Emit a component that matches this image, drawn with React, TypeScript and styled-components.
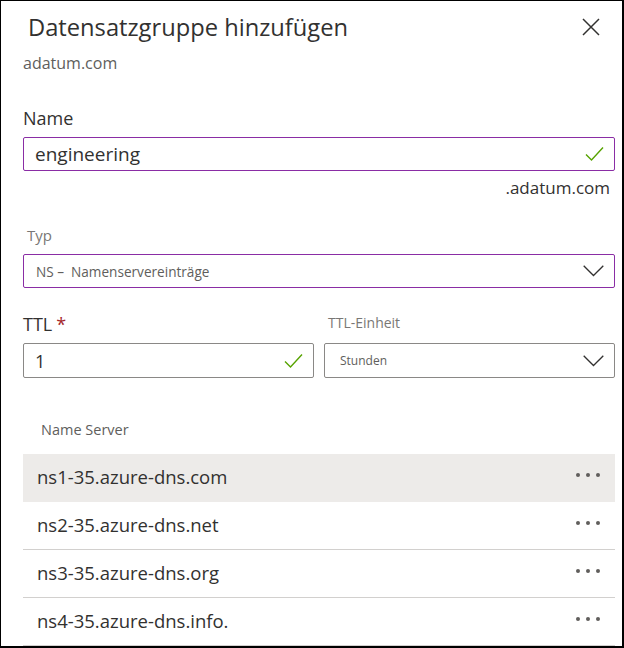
import React from "react";
import styled, { createGlobalStyle } from "styled-components";

const Global = createGlobalStyle`
  html, body { margin: 0; padding: 0; background: #fff; }
  body { font-family: "Segoe UI", "Open Sans", "Noto Sans", sans-serif; }
  * { box-sizing: border-box; }
`;

const Frame = styled.div`
  width: 624px;
  height: 648px;
  border-top: 1px solid #000;
  border-left: 1px solid #000;
  border-right: 2px solid #000;
  border-bottom: 2px solid #000;
  overflow: hidden;
  padding: 0 7px 0 22px;
  display: flex;
  flex-direction: column;
`;

const Header = styled.div`
  display: flex;
  align-items: center;
  justify-content: space-between;
  height: 54px;
  padding: 0 15px 0 5px;
`;

const Title = styled.h1`
  margin: 0;
  font-size: 23.7px;
  font-weight: 400;
  color: #323130;
  line-height: 30px;
`;

const Subtitle = styled.div`
  font-size: 16px;
  color: #605e5c;
  line-height: 20px;
  white-space: nowrap;
`;

const Label = styled.div<{ $small?: boolean; $mt: number }>`
  margin-top: ${(p) => p.$mt}px;
  font-size: ${(p) => (p.$small ? "15px" : "18px")};
  color: ${(p) => (p.$small ? "#797775" : "#323130")};
  line-height: 22px;
  padding-left: ${(p) => (p.$small ? "4px" : "0")};
`;

const Required = styled.span`
  color: #a4262c;
  margin-left: 4px;
`;

const Field = styled.div<{ $accent?: boolean; $mt: number }>`
  margin-top: ${(p) => p.$mt}px;
  height: 35px;
  border: 1px solid ${(p) => (p.$accent ? "#8a2da5" : "#8a8886")};
  border-radius: 2px;
  display: flex;
  align-items: center;
  justify-content: space-between;
  padding: 0 10px 0 11px;
  background: #fff;
`;

const FieldText = styled.span<{ $size: number; $muted?: boolean; $indent?: number }>`
  font-size: ${(p) => p.$size}px;
  color: ${(p) => (p.$muted ? "#605e5c" : "#323130")};
  white-space: pre;
  padding-left: ${(p) => p.$indent ?? 0}px;
`;

const Suffix = styled.div`
  text-align: right;
  font-size: 17px;
  color: #323130;
  line-height: 22px;
  margin-top: 6px;
  padding-right: 5px;
`;

const TtlGrid = styled.div`
  display: grid;
  grid-template-columns: 291px 1fr;
  column-gap: 10px;
  margin-top: 21px;
`;

const Col = styled.div`
  display: flex;
  flex-direction: column;
`;

const ColHeader = styled.div`
  height: 26px;
  display: flex;
  align-items: flex-end;
`;

const TtlLabel = styled.div`
  font-size: 18px;
  color: #323130;
  line-height: 22px;
`;

const UnitLabel = styled.div`
  font-size: 14px;
  color: #797775;
  line-height: 20px;
  padding-left: 4px;
  margin-bottom: 2px;
`;

const ListHeader = styled.div`
  margin-top: 42px;
  padding-left: 18px;
  font-size: 14.5px;
  color: #605e5c;
  line-height: 20px;
`;

const List = styled.div`
  margin-top: 14px;
  display: flex;
  flex-direction: column;
`;

const Row = styled.div<{ $selected?: boolean }>`
  height: 48px;
  display: flex;
  align-items: center;
  justify-content: space-between;
  padding: 0 15px 0 14px;
  background: ${(p) => (p.$selected ? "#edebe9" : "#fff")};
  border-bottom: 1px solid ${(p) => (p.$selected ? "#edebe9" : "#d2d0ce")};
`;

const RowText = styled.span`
  font-size: 18.5px;
  color: #323130;
  white-space: nowrap;
  padding-bottom: 2px;
`;

const Dots = styled.div`
  display: flex;
  gap: 6px;
  padding-bottom: 5px;
  & > span {
    width: 4px;
    height: 4px;
    border-radius: 50%;
    background: #605e5c;
  }
`;

const Check = () => (
  <svg width="19" height="16" viewBox="0 0 19 16" fill="none">
    <path d="M1 8.5 L6.5 14 L18 1.5" stroke="#57a300" strokeWidth="1.4" />
  </svg>
);

const Chevron = () => (
  <svg width="21" height="12" viewBox="0 0 21 12" fill="none">
    <path d="M0.7 0.7 L10.5 10.5 L20.3 0.7" stroke="#323130" strokeWidth="1.3" />
  </svg>
);

const Close = () => (
  <svg width="18" height="18" viewBox="0 0 18 18" fill="none">
    <path d="M1 1 L17 17 M17 1 L1 17" stroke="#323130" strokeWidth="1.5" />
  </svg>
);

const servers = [
  "ns1-35.azure-dns.com",
  "ns2-35.azure-dns.net",
  "ns3-35.azure-dns.org",
  "ns4-35.azure-dns.info.",
];

export default function App() {
  return (
    <>
      <Global />
      <Frame>
        <Header>
          <Title>Datensatzgruppe hinzufügen</Title>
          <Close />
        </Header>
        <Subtitle>adatum.com</Subtitle>
        <Label $mt={34}>Name</Label>
        <Field $accent $mt={8}>
          <FieldText $size={19}>engineering</FieldText>
          <Check />
        </Field>
        <Suffix>.adatum.com</Suffix>
        <Label $small $mt={25}>Typ</Label>
        <Field $accent $mt={8}>
          <FieldText $size={13.6} $muted $indent={1}>{"NS –  Namenservereinträge"}</FieldText>
          <Chevron />
        </Field>
        <TtlGrid>
          <Col>
            <ColHeader>
              <TtlLabel>
                TTL<Required>*</Required>
              </TtlLabel>
            </ColHeader>
            <Field $mt={8}>
              <FieldText $size={18}>1</FieldText>
              <Check />
            </Field>
          </Col>
          <Col>
            <ColHeader>
              <UnitLabel>TTL-Einheit</UnitLabel>
            </ColHeader>
            <Field $mt={8}>
              <FieldText $size={12} $muted $indent={4}>Stunden</FieldText>
              <Chevron />
            </Field>
          </Col>
        </TtlGrid>
        <ListHeader>Name Server</ListHeader>
        <List>
          {servers.map((s, i) => (
            <Row key={s} $selected={i === 0}>
              <RowText>{s}</RowText>
              <Dots>
                <span />
                <span />
                <span />
              </Dots>
            </Row>
          ))}
        </List>
      </Frame>
    </>
  );
}
